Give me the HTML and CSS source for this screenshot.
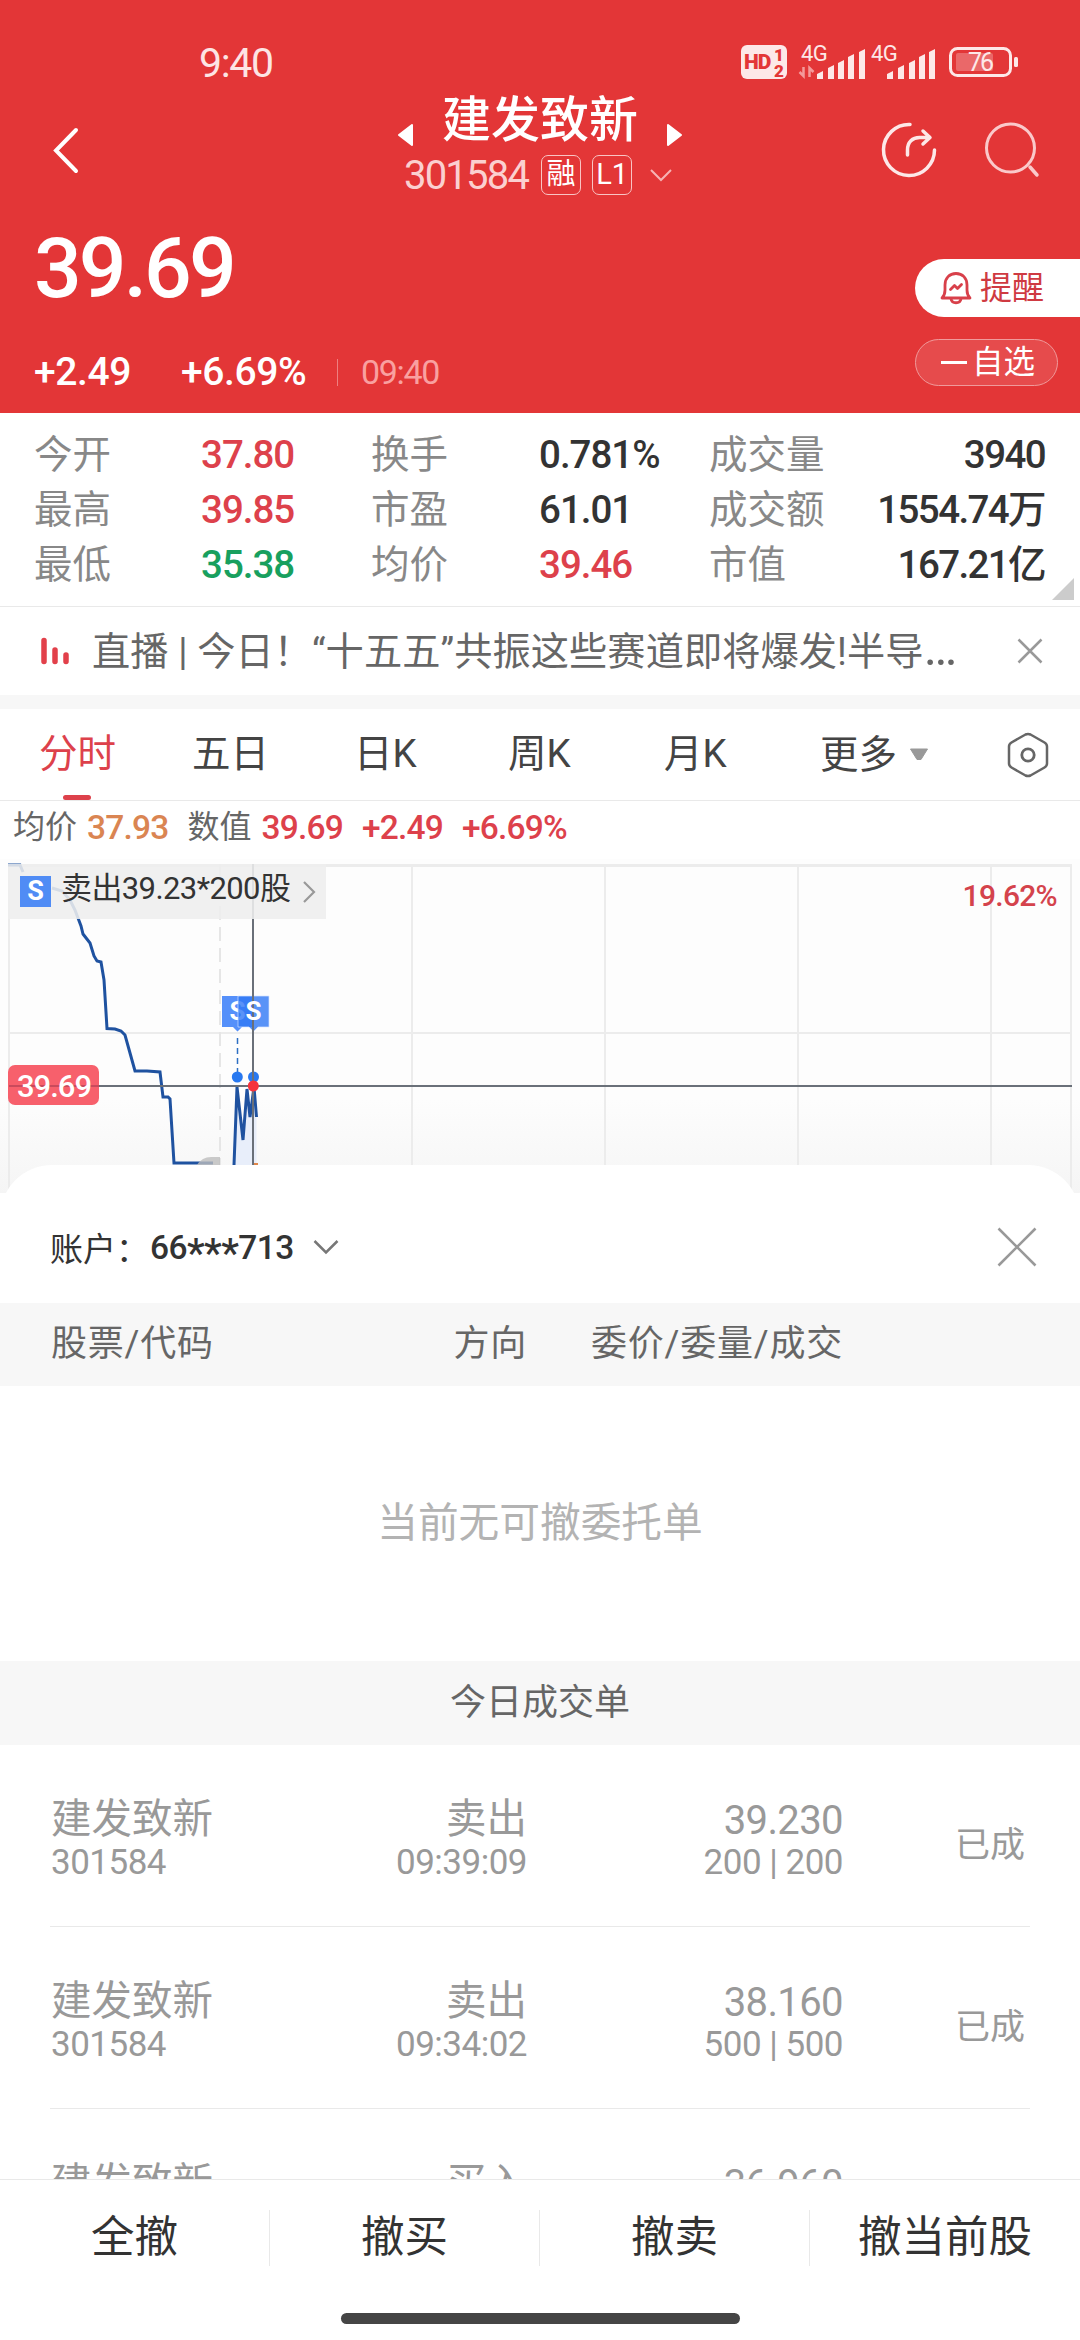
FILE: index.html
```html
<!DOCTYPE html>
<html lang="zh-CN">

<head>
    <meta charset="UTF-8">
    <meta name="viewport" content="width=device-width, initial-scale=1.0">
    <title>建发致新 301584</title>
    <link rel="stylesheet" href="styles.css">
</head>

<body>
    <header class="top">
        <div class="status-bar">
            <span class="clock">9:40</span>
            <svg class="status-icons" width="280" height="40" viewBox="740 42 280 40">
                <rect x="741" y="45" width="46" height="34" rx="6" fill="#fde8e8"/>
                <text x="744" y="69" class="hd">HD</text>
                <text x="774" y="61" class="hd-num">1</text>
                <text x="774" y="77" class="hd-num">2</text>
                <text x="801" y="61" class="net">4G</text>
                <path d="M803.500 67v9l-4-4M809.500 77v-9l4 4" fill="none" stroke="#f49a9b" stroke-width="2.500"/>
                <g fill="#fde8e8">
                    <path d="M817 79v-5l6-3v8zM828 79V68l6-3v14zM838 79V63l6-3v19zM848 79V57l6-3v25zM859 79V52l6-3v30z"/>
                    <path d="M887 79v-5l6-3v8zM898 79V68l6-3v14zM909 79V63l6-3v19zM919 79V57l6-3v25zM929 79V52l6-3v30z"/>
                </g>
                <text x="871" y="61" class="net">4G</text>
                <rect x="950.500" y="48.500" width="60" height="27" rx="7" fill="none" stroke="#fde8e8" stroke-width="3"/>
                <rect x="956" y="53" width="37" height="18" rx="2" fill="#fff" fill-opacity=".25"/>
                <rect x="1014" y="57" width="4" height="10" rx="1.500" fill="#fde8e8"/>
                <text x="980" y="71" class="battery">76</text>
            </svg>
        </div>

        <div class="nav">
            <svg class="back" width="28" height="50" viewBox="0 0 28 50">
                <path d="M24 5L4 25.500L24 46" fill="none" stroke="#fff" stroke-width="4" stroke-linecap="round"/>
            </svg>
            <svg class="arrow" width="16" height="22" viewBox="0 0 16 22"><path d="M14 1L1 11L14 21z" fill="#fff" stroke="#fff" stroke-width="2" stroke-linejoin="round"/></svg>
            <div class="stock">
                <h1>建发致新</h1>
                <div class="stock-sub">
                    <span class="stock-code">301584</span>
                    <span class="tag">融</span>
                    <span class="tag">L1</span>
                    <svg width="24" height="14" viewBox="0 0 24 14"><path d="M2 2l10 10L22 2" fill="none" stroke="#f6b3b4" stroke-width="2"/></svg>
                </div>
            </div>
            <svg class="arrow" width="16" height="22" viewBox="0 0 16 22"><path d="M2 1L15 11L2 21z" fill="#fff" stroke="#fff" stroke-width="2" stroke-linejoin="round"/></svg>
            <svg class="nav-icons" width="170" height="64" viewBox="878 120 170 64">
                <g fill="none" stroke="#fde8e8" stroke-width="3.500" stroke-linecap="round" stroke-linejoin="round">
                    <path d="M910 124.500A25.500 25.500 0 1 0 934.500 150"/>
                    <path d="M907.500 155v-5c0-8 5-12.500 12-12.500h9M923 131l7 6.500l-7 6.500"/>
                </g>
                <circle cx="1010.500" cy="148" r="24" fill="none" stroke="#fac9ca" stroke-width="3"/>
                <path d="M1030 167l7 8" stroke="#fac9ca" stroke-width="3.500" stroke-linecap="round"/>
            </svg>
        </div>

        <div class="quote">
            <div class="quote-left">
                <div class="price">39.69</div>
                <div class="change">
                    <span class="delta">+2.49</span>
                    <span class="pct">+6.69%</span>
                    <span class="time">09:40</span>
                </div>
            </div>
            <div class="quote-right">
                <div class="remind">
                    <svg width="32" height="34" viewBox="0 0 32 34">
                        <g fill="none" stroke="#d8404a" stroke-width="2.800" stroke-linejoin="round" stroke-linecap="round">
                            <path d="M2 27c2-2 3-4 3-8v-5c0-7 4.500-11.500 11-11.500S27 7 27 14v5c0 4 1 6 3 8zM11 28c1 5 9 5 10 0"/>
                            <path d="M10.500 18.500l4-4l3 3l4-4"/>
                        </g>
                    </svg>
                    <span>提醒</span>
                </div>
                <div class="favor"><i></i><span>自选</span></div>
            </div>
        </div>
    </header>

    <section class="stats">
        <span class="label">今开</span><span class="num up">37.80</span>
        <span class="label">换手</span><span class="num">0.781%</span>
        <span class="label">成交量</span><span class="num last">3940</span>
        <span class="label">最高</span><span class="num up">39.85</span>
        <span class="label">市盈</span><span class="num">61.01</span>
        <span class="label">成交额</span><span class="num last">1554.74万</span>
        <span class="label">最低</span><span class="num down">35.38</span>
        <span class="label">均价</span><span class="num up">39.46</span>
        <span class="label">市值</span><span class="num last">167.21亿</span>
        <i class="corner"></i>
    </section>

    <section class="news">
        <svg width="28" height="28" viewBox="0 0 28 28"><path d="M3 3.500v21M14 13v11.500M25 18v6.500" stroke="#e2404a" stroke-width="5.500" stroke-linecap="round"/></svg>
        <p>直播 | 今日！“十五五”共振这些赛道即将爆发!半导<span class="dots">…</span></p>
        <svg width="26" height="26" viewBox="0 0 26 26"><path d="M1.500 1.500l23 23M24.500 1.500l-23 23" stroke="#999" stroke-width="2.500"/></svg>
    </section>

    <nav class="tabs">
        <span class="tab active">分时</span>
        <span class="tab">五日</span>
        <span class="tab">日K</span>
        <span class="tab">周K</span>
        <span class="tab">月K</span>
        <span class="tab more">更多<svg width="20" height="13" viewBox="0 0 20 13"><path d="M1.500 1h17L12 11.500h-4z" fill="#999" stroke="#999" stroke-linejoin="round"/></svg></span>
        <svg class="gear" width="42" height="46" viewBox="0 0 42 46">
            <path d="M18.500 2.500q2.500-1.200 5 0l14 8q2.500 1.500 2.500 4v17q0 2.500-2.500 4l-14 8q-2.500 1.200-5 0l-14-8q-2.500-1.500-2.500-4v-17q0-2.500 2.500-4z" fill="none" stroke="#666" stroke-width="2.500"/>
            <circle cx="21" cy="23" r="6.200" fill="none" stroke="#666" stroke-width="2.800"/>
        </svg>
    </nav>

    <div class="legend">
        <span>均价</span><b class="avg">37.93</b><span class="gap">数值</span><b class="cur">39.69</b><b class="cur chg">+2.49</b><b class="cur">+6.69%</b>
    </div>

    <section class="chart">
        <svg width="1080" height="334" viewBox="0 859 1080 334">
            <g stroke="#ececec" stroke-width="2" fill="none">
                <path d="M8 865.500H1072" stroke-width="3"/>
                <path d="M9 864V1193M1071 864V1193M412 866V1193M605 866V1193M798 866V1193M991 866V1193M9 1033H1071"/>
                <path d="M220 864V1165" stroke-dasharray="14 7" stroke="#e6e6e6"/>
            </g>
            <!-- intraday price line -->
            <path d="M234 1165L237 1087L243 1140L247 1089L250 1117L254 1087L256.500 1117V1165z" fill="#e8eefa"/>
            <path d="M8 865H20L23 872M52 888L62 891L70 900L75 910L78 918L81 926L83 934L90 943L94 956L97 961L101 962L104 980L107 1028.500L115 1029L121 1031L125 1035L130 1053L135 1071H147L160 1072L163 1097H168L170 1099L174 1163H213" fill="none" stroke="#1f52a0" stroke-width="3"/>
            <path d="M234 1165L237 1087L243 1140L247 1089L250 1117L254 1087L256.500 1117" fill="none" stroke="#1f52a0" stroke-width="3"/>
            <path d="M197 1165q5-8 14-8h9v8z" fill="#bdbdbd" opacity=".8"/>
            <rect x="254" y="1163" width="4" height="3" fill="#e0864a"/>
            <!-- sell markers -->
            <path d="M222 996h31v31h-11l-4.500 4.500l-4.500-4.500h-11z" fill="#5590fa"/>
            <text x="237.500" y="1020" class="flag">S</text>
            <path d="M238 996h31v31h-11l-4.500 4.500l-4.500-4.500h-11z" fill="#3078f5" fill-opacity=".8" stroke="#d6e4ff" stroke-width=".7"/>
            <path d="M237.500 1038V1073" stroke="#2d6fc4" stroke-width="1.500" stroke-dasharray="6 4"/>
            <circle cx="237.300" cy="1077" r="5.500" fill="#2878f0"/>
            <circle cx="253.500" cy="1077" r="5.500" fill="#2878f0"/>
            <path d="M253 864V1165M9 1086H1072" stroke="#6a7079" stroke-width="2"/>
            <text x="253.500" y="1020" class="flag">S</text>
            <circle cx="253.300" cy="1086" r="5.500" fill="#f5323c"/>
            <rect x="8" y="1065" width="91" height="40" rx="7" fill="#f7606c"/>
            <path d="M9 1086H99" stroke="#c94a5c" stroke-width="2"/>
            <text x="17" y="1097" class="price-tag">39.69</text>
            <text x="1057" y="906" class="max-pct">19.62%</text>
        </svg>
        <div class="trade-tip">
            <span class="s-box">S</span>
            <span class="tip-text">卖出39.23*200股</span>
            <svg width="14" height="24" viewBox="0 0 14 24"><path d="M2 2l10 10L2 22" fill="none" stroke="#999" stroke-width="2.200"/></svg>
        </div>
    </section>

    <section class="sheet">
        <div class="account">
            <span>账户：</span>
            <span class="account-no">66<em>***</em>713</span>
            <svg width="26" height="16" viewBox="0 0 26 16"><path d="M1.500 2L13 13.500L24.500 2" fill="none" stroke="#777" stroke-width="2.500"/></svg>
            <svg class="close" width="40" height="40" viewBox="0 0 40 40"><path d="M1.500 1.500l37 37M38.500 1.500l-37 37" stroke="#999" stroke-width="2.600"/></svg>
        </div>
        <div class="row head">
            <span>股票/代码</span><span class="right">方向</span><span class="right">委价/委量/成交</span><span></span>
        </div>
        <div class="empty">当前无可撤委托单</div>
        <div class="subhead">今日成交单</div>
        <div class="deals">
            <div class="row deal">
                <div><p>建发致新</p><small>301584</small></div>
                <div class="right"><p>卖出</p><small>09:39:09</small></div>
                <div class="right"><p class="n">39.230</p><small>200 | 200</small></div>
                <span class="state">已成</span>
            </div>
            <div class="row deal">
                <div><p>建发致新</p><small>301584</small></div>
                <div class="right"><p>卖出</p><small>09:34:02</small></div>
                <div class="right"><p class="n">38.160</p><small>500 | 500</small></div>
                <span class="state">已成</span>
            </div>
            <div class="row deal">
                <div><p>建发致新</p></div>
                <div class="right"><p>买入</p></div>
                <div class="right"><p class="n">36.960</p></div>
            </div>
        </div>
    </section>

    <footer class="actions">
        <span>全撤</span>
        <span>撤买</span>
        <span>撤卖</span>
        <span>撤当前股</span>
    </footer>
    <div class="home-bar"></div>
</body>

</html>
```

FILE: styles.css
```css
/* Reset */
* {
    margin: 0;
    padding: 0;
    box-sizing: border-box;
}

body {
    width: 1080px;
    height: 2340px;
    overflow: hidden;
    background: #fff;
    color: #333;
    font-family: Roboto, "Noto Sans CJK SC", sans-serif;
    display: flex;
    flex-direction: column;
}

svg {
    display: block;
    flex: none;
}

span,
p,
b {
    white-space: nowrap;
}

/* Red header */
.top {
    height: 413px;
    background: #e33637;
    color: #fff;
    flex: none;
}

.status-bar {
    height: 82px;
    padding: 42px 60px 0 199px;
    display: flex;
    justify-content: space-between;
}

.clock {
    font-size: 41px;
    line-height: 42px;
    letter-spacing: -1.3px;
    color: #fde4e4;
}

.hd {
    font: 900 21px Roboto, sans-serif;
    fill: #e33637;
    letter-spacing: -1px;
}

.hd-num {
    font: 900 17px Roboto, sans-serif;
    fill: #e33637;
}

.net {
    font: 400 22px Roboto, sans-serif;
    fill: #fde8e8;
    letter-spacing: -.5px;
}

.battery {
    font: 400 25px Roboto, sans-serif;
    fill: #fde8e8;
    text-anchor: middle;
    letter-spacing: -2px;
}

.nav {
    height: 134px;
    padding-left: 52px;
    display: flex;
    align-items: flex-start;
}

.back {
    margin-top: 43px;
}

.arrow {
    margin-top: 42px;
}

.back + .arrow {
    margin-left: 318px;
}

.stock {
    width: 252px;
    text-align: center;
}

.stock h1 {
    font-size: 49px;
    font-weight: 500;
    line-height: 78px;
    height: 69px;
}

.stock-sub {
    display: flex;
    align-items: center;
    height: 48px;
    margin: 0 -10px 0 -10px;
}

.stock-code {
    font-size: 40px;
    letter-spacing: -1.8px;
    color: #fbd0d0;
    margin-right: 13px;
}

.tag {
    width: 40px;
    height: 40px;
    border: 1.5px solid #f9c4c4;
    border-radius: 7px;
    font-size: 29px;
    line-height: 37px;
    text-align: center;
    margin-right: 11px;
}

.stock-sub svg {
    margin-left: 6px;
}

.nav-icons {
    margin-left: 196px;
    margin-top: 38px;
}

.quote {
    display: flex;
    justify-content: space-between;
    height: 197px;
}

.quote-left {
    padding-left: 34px;
}

.price {
    font-size: 84px;
    font-weight: 500;
    line-height: 100px;
    letter-spacing: -2.9px;
    margin-top: 3px;
}

.change {
    display: flex;
    align-items: center;
    height: 50px;
    margin-top: 28px;
    font-size: 39px;
    font-weight: 500;
    letter-spacing: -.4px;
}

.delta {
    width: 147px;
}

.pct {
    width: 156px;
}

.time {
    border-left: 1px solid #ee7f80;
    padding-left: 23px;
    font-size: 34px;
    font-weight: 400;
    line-height: 27px;
    color: #f9a0a0;
    letter-spacing: -1.3px;
}

.quote-right {
    width: 165px;
    padding-top: 43px;
}

.remind {
    height: 58px;
    background: #fff;
    border-radius: 29px 0 0 29px;
    color: #cf3a42;
    display: flex;
    align-items: center;
    padding-left: 25px;
    gap: 8px;
    font-size: 32px;
    line-height: 58px;
}

.favor {
    margin-top: 22px;
    width: 143px;
    height: 47px;
    border: 1.5px solid #f09a9b;
    border-radius: 24px;
    background: #e64b4c;
    display: flex;
    align-items: center;
    padding-left: 25px;
    font-size: 31.5px;
    line-height: 42px;
}

.favor i {
    width: 26px;
    height: 3px;
    background: #fff;
    margin-right: 5px;
}

/* Quote numbers */
.stats {
    position: relative;
    height: 194px;
    flex: none;
    border-bottom: 1px solid #e9e9e9;
    padding: 14px 35px 0 34px;
    display: grid;
    grid-template-columns: 167px 170px 168px 170px 1fr auto;
    grid-auto-rows: 55px;
    align-items: center;
    align-content: start;
    font-size: 38.5px;
    line-height: 55px;
}

.label {
    color: #888;
}

.num {
    font-weight: 500;
    letter-spacing: -1px;
}

.last {
    text-align: right;
    letter-spacing: -1.6px;
}

.up {
    color: #dd414b;
}

.down {
    color: #18a05e;
}

.corner {
    position: absolute;
    right: 6px;
    bottom: 6px;
    width: 22px;
    height: 22px;
    background: #ccc;
    clip-path: polygon(100% 0, 100% 100%, 0 100%);
}

.news {
    height: 102px;
    flex: none;
    border-bottom: 14px solid #f7f7f7;
    display: flex;
    align-items: center;
    padding: 0 37px 0 41px;
    font-size: 38.2px;
    color: #666;
}

.news p {
    margin: 0 auto 0 23px;
    line-height: 88px;
    height: 86px;
    letter-spacing: .1px;
}

.dots {
    font-size: 50px;
    line-height: 40px;
}

/* Period tabs */
.tabs {
    height: 92px;
    flex: none;
    border-bottom: 1.5px solid #e9e9e9;
    display: grid;
    grid-template-columns: 153px 162px 154px 156px 156px 187px 42px;
    padding-left: 39px;
    font-size: 38.5px;
    line-height: 89px;
    color: #444;
}

.active {
    color: #dd414b;
    display: flex;
    flex-direction: column;
}

.active::after {
    content: "";
    width: 28px;
    height: 5px;
    border-radius: 3px;
    background: #dd414b;
    margin: -3px 0 0 24px;
}

.more {
    display: flex;
    align-items: center;
    gap: 12px;
}

.gear {
    margin-top: 23px;
}

.legend {
    height: 58px;
    flex: none;
    display: flex;
    padding-left: 13px;
    font-size: 32px;
    line-height: 52px;
    color: #666;
}

.legend b {
    font-size: 33.5px;
    font-weight: 500;
    letter-spacing: -.8px;
    margin: 1px 19px 0 10px;
}

.legend .avg {
    color: #da8552;
}

.legend .cur {
    color: #dd414b;
}

.legend .cur + .cur {
    margin-left: 0;
}

/* Minute chart, its lower edge runs under the rounded sheet */
.chart {
    position: relative;
    height: 334px;
    margin-bottom: -28px;
    flex: none;
    background: linear-gradient(#fdfdfd 72%, #f5f5f5);
}

.trade-tip {
    position: absolute;
    left: 8px;
    top: 5px;
    width: 318px;
    height: 55px;
    background: rgba(238, 238, 238, .88);
    display: flex;
    align-items: center;
    padding-left: 12px;
    font-size: 31px;
}

.s-box {
    width: 31px;
    height: 31px;
    background: #508cf5;
    color: #fff;
    font-size: 27px;
    font-weight: 700;
    line-height: 31px;
    text-align: center;
    margin-right: 10px;
}

.tip-text {
    width: 241px;
    line-height: 46px;
    margin-top: -6px;
    letter-spacing: -.6px;
}

.flag {
    font: 700 26px Roboto, sans-serif;
    fill: #fff;
    text-anchor: middle;
}

.price-tag {
    font: 500 31px Roboto, sans-serif;
    fill: #fff;
    letter-spacing: -1px;
}

.max-pct {
    font: 500 30px Roboto, sans-serif;
    fill: #d4434c;
    text-anchor: end;
    letter-spacing: -.7px;
}

/* Order sheet */
.sheet {
    position: relative;
    height: 1014px;
    flex: none;
    background: #fff;
    border-radius: 52px 52px 0 0;
}

.account {
    height: 138px;
    padding: 26px 43px 0 50px;
    display: flex;
    align-items: center;
    font-size: 33px;
}

.account-no {
    font-size: 33.5px;
    font-weight: 500;
    letter-spacing: -.6px;
    margin: 0 19px 0 1px;
}

.account-no em {
    font-style: normal;
    font-size: 40px;
    line-height: 20px;
    vertical-align: -8px;
}

.close {
    margin-left: auto;
}

.row {
    display: grid;
    grid-template-columns: 240px 236px 316px 180px;
    padding-left: 51px;
}

.right {
    text-align: right;
}

.head {
    height: 83px;
    background: #f7f7f7;
    font-size: 36px;
    line-height: 83px;
    letter-spacing: .8px;
    color: #666;
}

.empty {
    height: 275px;
    text-align: center;
    font-size: 40.7px;
    line-height: 274px;
    color: #b3b3b3;
}

.subhead {
    height: 84px;
    background: #f7f7f7;
    text-align: center;
    font-size: 36px;
    line-height: 84px;
    color: #666;
}

.deals {
    height: 434px;
    overflow: hidden;
}

.deal {
    height: 182px;
    margin: 0 50px;
    padding: 50px 0 0 1px;
    border-bottom: 1.5px solid #e9e9e9;
    color: #999;
    font-size: 40.5px;
}

.deal p {
    line-height: 48px;
    height: 48px;
}

.deal .n {
    font-size: 40px;
    padding-top: 2px;
    letter-spacing: -.6px;
}

.deal small {
    display: block;
    font-size: 35px;
    line-height: 39px;
    letter-spacing: -.5px;
}

.state {
    font-size: 35px;
    line-height: 102px;
    padding-left: 112px;
}

/* Bottom actions */
.actions {
    height: 134px;
    flex: none;
    border-top: 1.5px solid #e9e9e9;
    display: grid;
    grid-template-columns: repeat(4, 1fr);
    padding-top: 30px;
    background: #fff;
    position: relative;
    font-size: 43.5px;
    line-height: 56px;
    text-align: center;
}

.actions span {
    height: 56px;
    border-right: 1.5px solid #e9e9e9;
}

.actions span:last-child {
    border-right: 0;
}

.home-bar {
    width: 399px;
    height: 11px;
    border-radius: 6px;
    background: #454545;
    margin: 0 auto;
}
```
